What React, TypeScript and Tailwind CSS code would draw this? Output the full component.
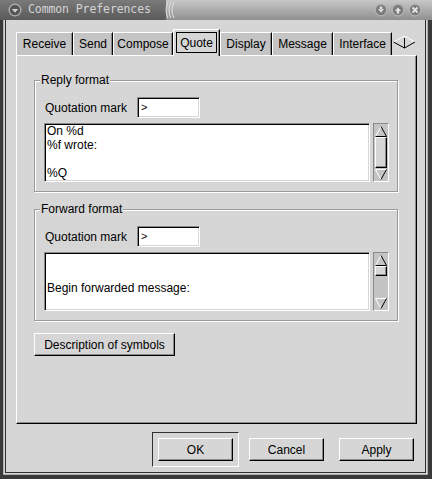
import React from 'react'

const sunken =
  'border border-t-[#8a8a8a] border-l-[#8a8a8a] border-b-white border-r-white shadow-[inset_1px_1px_0_#000,inset_-1px_-1px_0_#d6d6d6]'
const raised =
  'border border-t-white border-l-white border-b-black border-r-black shadow-[inset_-1px_-1px_0_#8a8a8a]'

const TitleButton = ({ kind }: { kind: 'min' | 'max' | 'close' | 'menu' }) => (
  <svg width="14" height="14" viewBox="0 0 14 14">
    <circle cx="7" cy="7" r="6.5" fill="#b4b4b4" />
    <circle cx="7" cy="7" r="5.2" fill={kind === 'menu' ? '#555' : '#7c7c7c'} />
    {kind === 'min' && <path d="M4 6 L7 9.5 L10 6 Z M5.8 3.5 h2.4 v3 h-2.4 Z" fill="#e4e4e4" />}
    {kind === 'max' && <path d="M4 8 L7 4.5 L10 8 Z M5.8 8 h2.4 v2.5 h-2.4 Z" fill="#e4e4e4" />}
    {kind === 'close' && (
      <path d="M4.5 4.5 L9.5 9.5 M9.5 4.5 L4.5 9.5" stroke="#e4e4e4" strokeWidth="1.8" />
    )}
    {kind === 'menu' && <path d="M3.8 6 h6.4 L7 9.8 Z" fill="#cfcfcf" />}
  </svg>
)

const TitleBar = () => (
  <div className="h-[20px] flex shrink-0">
    <div className="w-[166px] flex items-center bg-gradient-to-b from-[#7a7a7a] to-[#5a5a5a] pl-[8px]">
      <TitleButton kind="menu" />
      <span className="ml-[6px] font-['DejaVu_Sans_Mono',monospace] text-[11.5px] text-[#d4d4d4] tracking-[-0.1px]">
        Common Preferences
      </span>
    </div>
    <div className="flex-1 flex items-center bg-gradient-to-b from-[#c8c8c8] to-[#909090]">
      <svg width="12" height="20" viewBox="0 0 12 20" className="-ml-[2px]">
        <path d="M4 2 Q0 10 4 18" stroke="#e0e0e0" strokeWidth="1" fill="none" />
        <path d="M7 2 Q3 10 7 18" stroke="#e0e0e0" strokeWidth="1" fill="none" />
        <path d="M10 2 Q6 10 10 18" stroke="#e0e0e0" strokeWidth="1" fill="none" />
      </svg>
      <div className="ml-auto mr-[10px] flex gap-[3px]">
        <TitleButton kind="min" />
        <TitleButton kind="max" />
        <TitleButton kind="close" />
      </div>
    </div>
  </div>
)

const Tab = ({ label, w }: { label: string; w: string }) => (
  <div
    className={`${w} h-[23px] bg-[#c4c4c4] border-t border-l border-r border-t-white border-l-white border-r-black shadow-[inset_-1px_0_0_#8a8a8a] flex items-center justify-center`}
  >
    {label}
  </div>
)

const Arrow = ({ up }: { up: boolean }) => (
  <div className="h-[12px] flex items-center justify-center">
    <svg width="12" height="11" viewBox="0 0 12 11">
      {up ? (
        <>
          <path d="M0.5 10.5 L6 0.5" stroke="#fff" fill="none" />
          <path d="M6 0.5 L11.5 10.5 M0.5 10.5 H11.5" stroke="#000" fill="none" />
        </>
      ) : (
        <>
          <path d="M0.5 0.5 H11.5 M0.5 0.5 L6 10.5" stroke="#fff" fill="none" />
          <path d="M11.5 0.5 L6 10.5" stroke="#000" fill="none" />
        </>
      )}
    </svg>
  </div>
)

const Scrollbar = ({ thumb }: { thumb: string }) => (
  <div className="w-[16px] h-[59px] bg-[#c4c4c4] border border-t-[#8a8a8a] border-l-[#8a8a8a] border-b-white border-r-white flex flex-col px-[1px] py-[1px]">
    <Arrow up />
    <div className="flex-1 flex flex-col">
      <div className={`${thumb} bg-[#d6d6d6] ${raised}`} />
    </div>
    <Arrow up={false} />
  </div>
)

const Frame = ({ title, text, thumb }: { title: string; text: string; thumb: string }) => (
  <div className="relative w-[364px] h-[112px] border border-[#9a9a9a] shadow-[inset_1px_1px_0_#fff,1px_1px_0_#fff] pl-[9px] pt-[16px]">
    <span className="absolute -top-[8px] left-[5px] px-[1px] leading-[14px] bg-[#d6d6d6]">{title}</span>
    <div className="flex items-center h-[21px]">
      <span className="w-[93px] pl-[1px]">Quotation mark</span>
      <div className={`w-[63px] h-[21px] bg-white ${sunken} flex items-center pl-[3px] text-[11px]`}>&gt;</div>
    </div>
    <div className="flex mt-[5px]">
      <div className={`w-[326px] h-[59px] bg-white ${sunken} pl-[2px] leading-[14px] whitespace-pre`}>{text}</div>
      <div className="ml-[3px]">
        <Scrollbar thumb={thumb} />
      </div>
    </div>
  </div>
)

const Button = ({ label, w }: { label: string; w: string }) => (
  <div className={`${w} h-[23px] bg-[#d6d6d6] ${raised} flex items-center justify-center`}>{label}</div>
)

export default function App() {
  return (
    <div className="w-[432px] h-[479px] bg-[#3a3a3a] flex flex-col overflow-hidden font-['Liberation_Sans',Arial,sans-serif] text-[12px] text-black">
      <TitleBar />
      <div className="flex-1 flex pl-[3px] pr-[4px] pb-[4px]">
        <div className="flex-1 flex border-l border-r border-b border-[#b0b0b0] bg-[#d6d6d6] px-[1px] pb-[1px]">
          <div className="flex-1 flex flex-col border-l border-r border-b border-[#303030] bg-[#d6d6d6] pl-[10px] pr-[8px] pt-[9px]">
            <div className="flex items-end h-[26px]">
              <Tab label="Receive" w="w-[57px]" />
              <Tab label="Send" w="w-[40px]" />
              <Tab label="Compose" w="w-[60px]" />
              <div className="relative z-10 -mb-px w-[47px] h-[27px] bg-[#d6d6d6] border-t border-l border-r border-t-white border-l-white border-r-black shadow-[inset_-1px_0_0_#8a8a8a] pl-[2px] pr-[2px] pt-[2px]">
                <div className="h-[21px] border border-black flex items-center justify-center">Quote</div>
              </div>
              <Tab label="Display" w="w-[52px]" />
              <Tab label="Message" w="w-[61px]" />
              <Tab label="Interface" w="w-[59px]" />
              <div className="w-[24px] h-[26px] flex items-center justify-center">
                <svg width="24" height="14" viewBox="0 0 24 14">
                  <path d="M12.5 1 L1.5 7 M12.5 1 L23 7" stroke="#fff" fill="none" />
                  <path d="M1.5 7 L12.5 13 M23 7 L12.5 13 M12.5 3 V13" stroke="#000" fill="none" />
                </svg>
              </div>
            </div>
            <div className="h-[369px] border border-t-white border-l-white border-b-black border-r-black shadow-[inset_-1px_-1px_0_#8a8a8a] pl-[17px] pt-[24px] flex flex-col">
              <Frame title="Reply format" text={'On %d\n%f wrote:\n\n%Q'} thumb="h-[31px]" />
              <div className="mt-[17px]">
                <Frame title="Forward format" text={'\n\nBegin forwarded message:'} thumb="h-[10px]" />
              </div>
              <div className="mt-[12px]">
                <Button label="Description of symbols" w="w-[141px]" />
              </div>
            </div>
            <div className="flex items-center mt-[8px]">
              <div className="ml-auto w-[87px] h-[35px] border border-t-[#303030] border-l-[#303030] border-b-white border-r-white p-[5px]">
                <Button label="OK" w="w-[75px]" />
              </div>
              <div className="ml-[10px]">
                <Button label="Cancel" w="w-[75px]" />
              </div>
              <div className="ml-[15px] mr-[3px]">
                <Button label="Apply" w="w-[75px]" />
              </div>
            </div>
          </div>
        </div>
      </div>
    </div>
  )
}
